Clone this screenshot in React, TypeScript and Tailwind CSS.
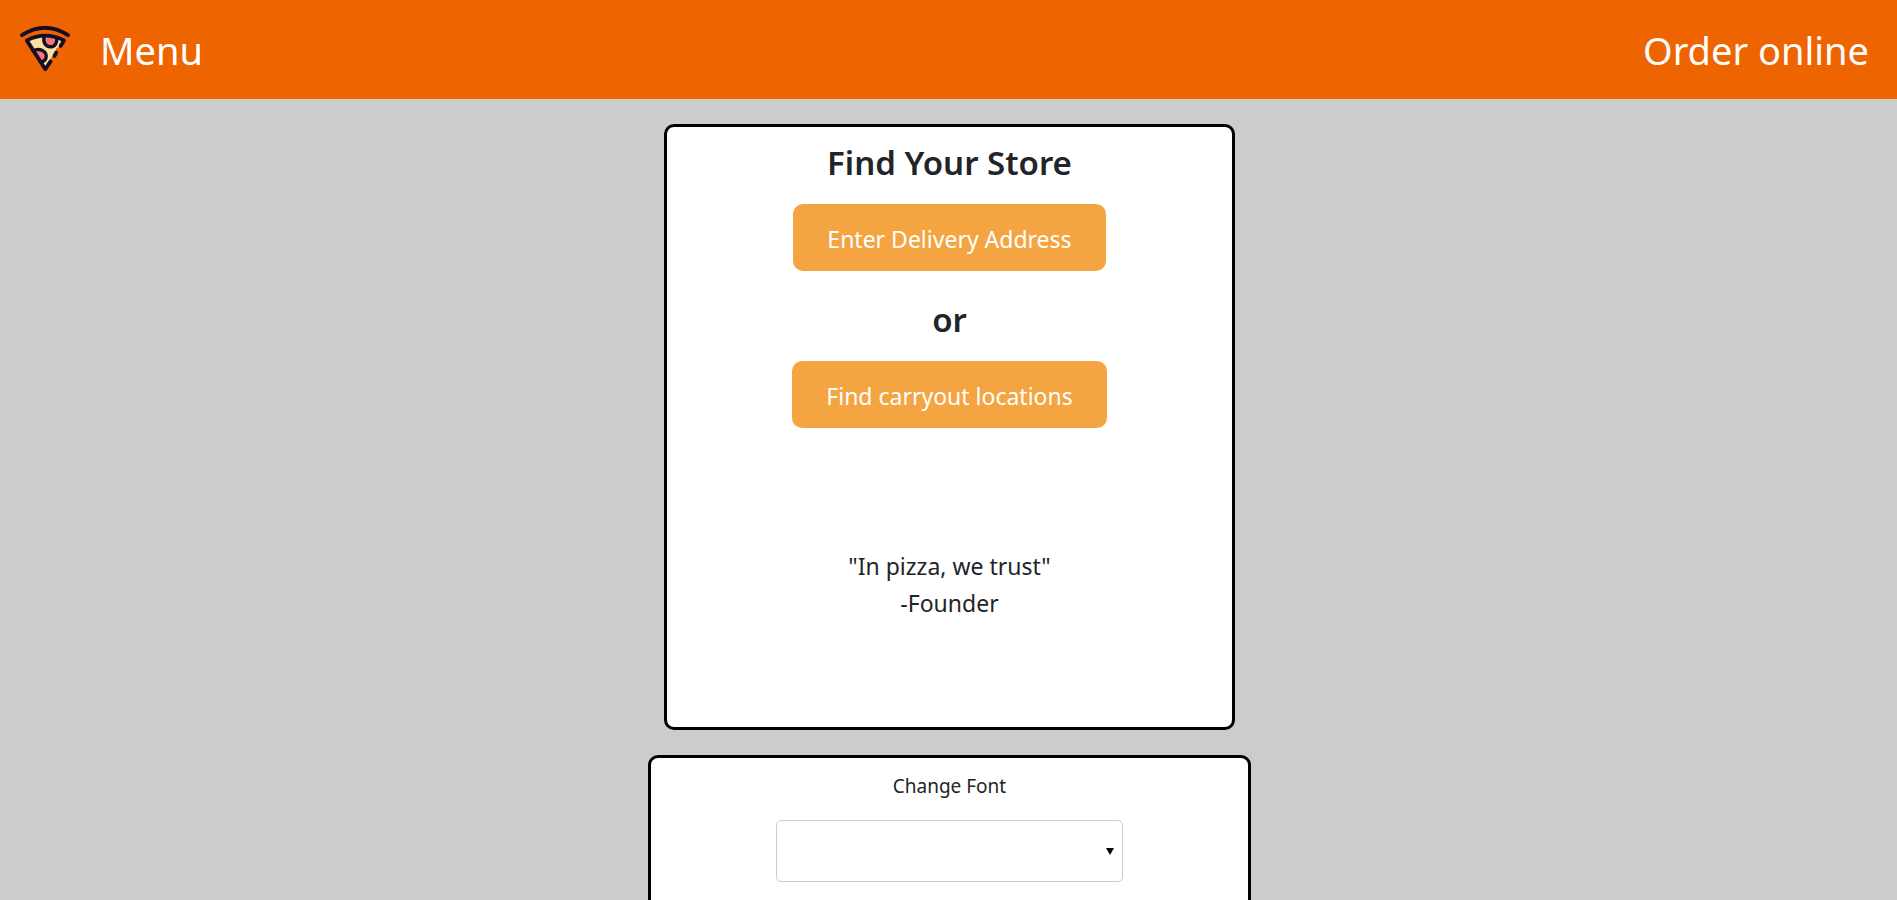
function PizzaLogo() {
  return (
    <svg
      aria-hidden="true"
      viewBox="0 0 50 47"
      className="h-[47px] w-[50px]"
      fill="none"
      stroke="#170d25"
      strokeWidth="3.8"
      strokeLinecap="round"
      strokeLinejoin="round"
    >
      <path
        d="M6.8 14.4Q25 4.7 43.8 14.4L39.5 21L36.5 22L35 27L32 31L30 33.5L28 37L25.3 43.2Z"
        fill="#fbe19f"
        stroke="none"
      />
      <circle cx="30.2" cy="14.4" r="4.6" fill="#fb7476" stroke="none" />
      <path d="M24.2 10.5C22.8 16.6 25.6 20.8 30.4 20.8C34.8 20.8 37.4 17 36.6 11.5" strokeWidth="3.4" />
      <path d="M14.5 26.6C18.5 23.6 24.4 26 24.4 30.5C24.4 33.6 22.6 34.8 19.8 34.8Z" fill="#fb7476" stroke="none" />
      <path d="M13.2 25C18.6 21.8 25.6 24.4 26.2 29.8C26.4 33.6 24 35.8 20.4 35.6" strokeWidth="3.4" />
      <path d="M2 9.2Q25 -5.6 48 9.2" />
      <path d="M40.6 20L44 14.4Q25 4.7 6.8 14.4L25.3 43.2L28.9 37.8" />
      <path d="M36.2 26.6L34.4 30" />
      <path d="M30.6 35.4L28.9 38" />
    </svg>
  );
}

const actionClass =
  "rounded-[10px] bg-[#f4a541] px-[34px] pt-[17px] pb-3.5 text-[23px] leading-9 text-white";

export default function App() {
  return (
    <div className="min-h-screen bg-[#ccc] font-['Noto_Sans','Open_Sans',sans-serif] text-[#212529]">
      <header className="flex h-[99px] items-center bg-[#ee6400] pl-5 pr-7 text-[38px] leading-[60px] text-white">
        <nav className="flex w-full items-center">
          <a href="#home" aria-label="Home" className="mr-[30px]">
            <PizzaLogo />
          </a>
          <a href="#menu">Menu</a>
          <a href="#order" className="ml-auto">Order online</a>
        </nav>
      </header>

      <main className="flex flex-col items-center gap-[25px] pt-[25px] pl-0.5">
        <section className="flex h-[606px] w-full max-w-[571px] flex-col items-center rounded-[10px] border-[3px] border-black bg-white pt-[15px]">
          <h1 className="mb-[21px] text-[33px] leading-[41px] font-semibold">Find Your Store</h1>
          <button type="button" className={actionClass}>Enter Delivery Address</button>
          <h2 className="mt-7 mb-[21px] text-[33px] leading-[41px] font-semibold">or</h2>
          <button type="button" className={actionClass}>Find carryout locations</button>
          <p className="mt-[120px] text-center text-[23px] leading-[37px]">
            "In pizza, we trust"
            <br />
            -Founder
          </p>
        </section>

        <section className="flex h-[200px] w-full max-w-[603px] flex-col items-center rounded-[10px] border-[3px] border-black bg-white pt-[13px]">
          <label htmlFor="font" className="mb-[19px] text-[19px] leading-[30px]">Change Font</label>
          <div className="relative w-[347px]">
            <select
              id="font"
              defaultValue=""
              className="h-[62px] w-full appearance-none rounded-[5px] border border-[#ccc] bg-white px-5 text-[19px]"
            >
              <option value=""></option>
              <option value="open-sans">Open Sans</option>
              <option value="roboto">Roboto</option>
            </select>
            <svg
              aria-hidden="true"
              viewBox="0 0 8 7"
              className="pointer-events-none absolute top-7 right-[9px] h-[7px] w-2"
            >
              <path d="M0 0H8L4 7Z" fill="#000" />
            </svg>
          </div>
        </section>
      </main>
    </div>
  );
}
